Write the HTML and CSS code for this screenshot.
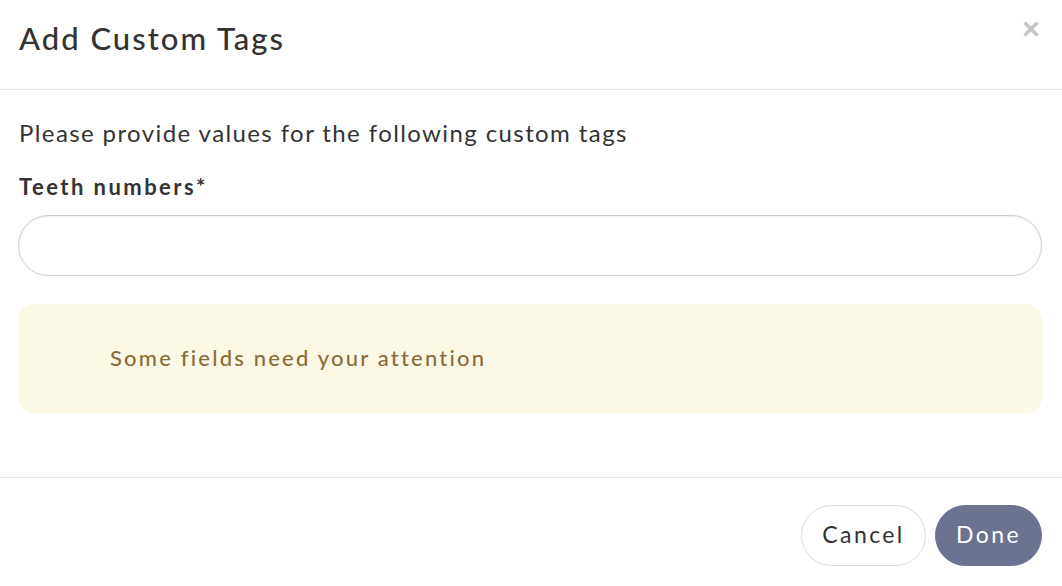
FILE: index.html
```html
<!DOCTYPE html>
<html>
<head>
<meta charset="utf-8">
<link rel="stylesheet" href="styles.css">
</head>
<body>
<div class="modal">
  <div class="modal-header">
    <h2 class="title">Add Custom Tags</h2>
    <svg class="close" width="18" height="16" viewBox="0 0 18 16" aria-label="Close">
      <path d="M2.5 1.5 L15.5 14.5 M15.5 1.5 L2.5 14.5" stroke="#c6c6c6" stroke-width="3.6" stroke-linecap="butt"/>
    </svg>
  </div>
  <div class="modal-body">
    <p class="intro">Please provide values for the following custom tags</p>
    <label class="label">Teeth numbers*</label>
    <input class="field" type="text">
    <div class="alert">Some fields need your attention</div>
  </div>
  <div class="modal-footer">
    <button class="btn btn-cancel">Cancel</button>
    <button class="btn btn-done">Done</button>
  </div>
</div>
</body>
</html>
```
FILE: styles.css
```css
* { box-sizing: border-box; }
html, body { margin: 0; padding: 0; background: #fff; }
body { font-family: Lato, "Open Sans", sans-serif; color: #333; width: 1062px; height: 586px; overflow: hidden; }
.modal { display: flex; flex-direction: column; }
.modal-header {
  height: 90px;
  border-bottom: 1px solid #e5e5e5;
  display: flex;
  justify-content: space-between;
  align-items: flex-start;
  padding: 0 22px 0 19px;
}
.title { margin: 19px 0 0; font-size: 31px; font-weight: 500; color: #333; letter-spacing: 2px; }
.close { margin-top: 21px; display: block; }
.modal-body { padding: 28px 20px 0 18px; height: 387px; }
.intro { margin: 0 0 0 1px; font-size: 24px; line-height: 30px; letter-spacing: 1.4px; }
.label { display: block; margin: 24px 0 0 1px; font-size: 22px; font-weight: 700; line-height: 30px; letter-spacing: 2.45px; }
.field {
  display: block;
  width: 100%;
  height: 61px;
  margin-top: 13px;
  border: 1px solid #cfcfcf;
  border-radius: 30px;
  box-shadow: inset 0 1px 2px rgba(0,0,0,0.08);
  outline: none;
}
.alert {
  margin-top: 28px;
  height: 109px;
  background: #fbf8e5;
  border-radius: 16px;
  color: #8a6d3b;
  font-size: 22px;
  font-weight: 500;
  display: flex;
  align-items: center;
  padding-left: 92px;
  padding-bottom: 2px;
  letter-spacing: 2.2px;
}
.modal-footer {
  border-top: 1px solid #e5e5e5;
  padding: 27px 20px 0 0;
  display: flex;
  justify-content: flex-end;
  gap: 9px;
}
.btn {
  height: 61px;
  border-radius: 31px;
  font-family: inherit;
  font-size: 23px;
  padding: 0 0 4px;
  letter-spacing: 2.4px;
  text-align: center;
}
.btn-cancel { background: #fff; border: 1px solid #d9d9e0; color: #333; width: 125px; }
.btn-done { background: #6b7390; border: 1px solid #6b7390; color: #fff; width: 107px; }
```
